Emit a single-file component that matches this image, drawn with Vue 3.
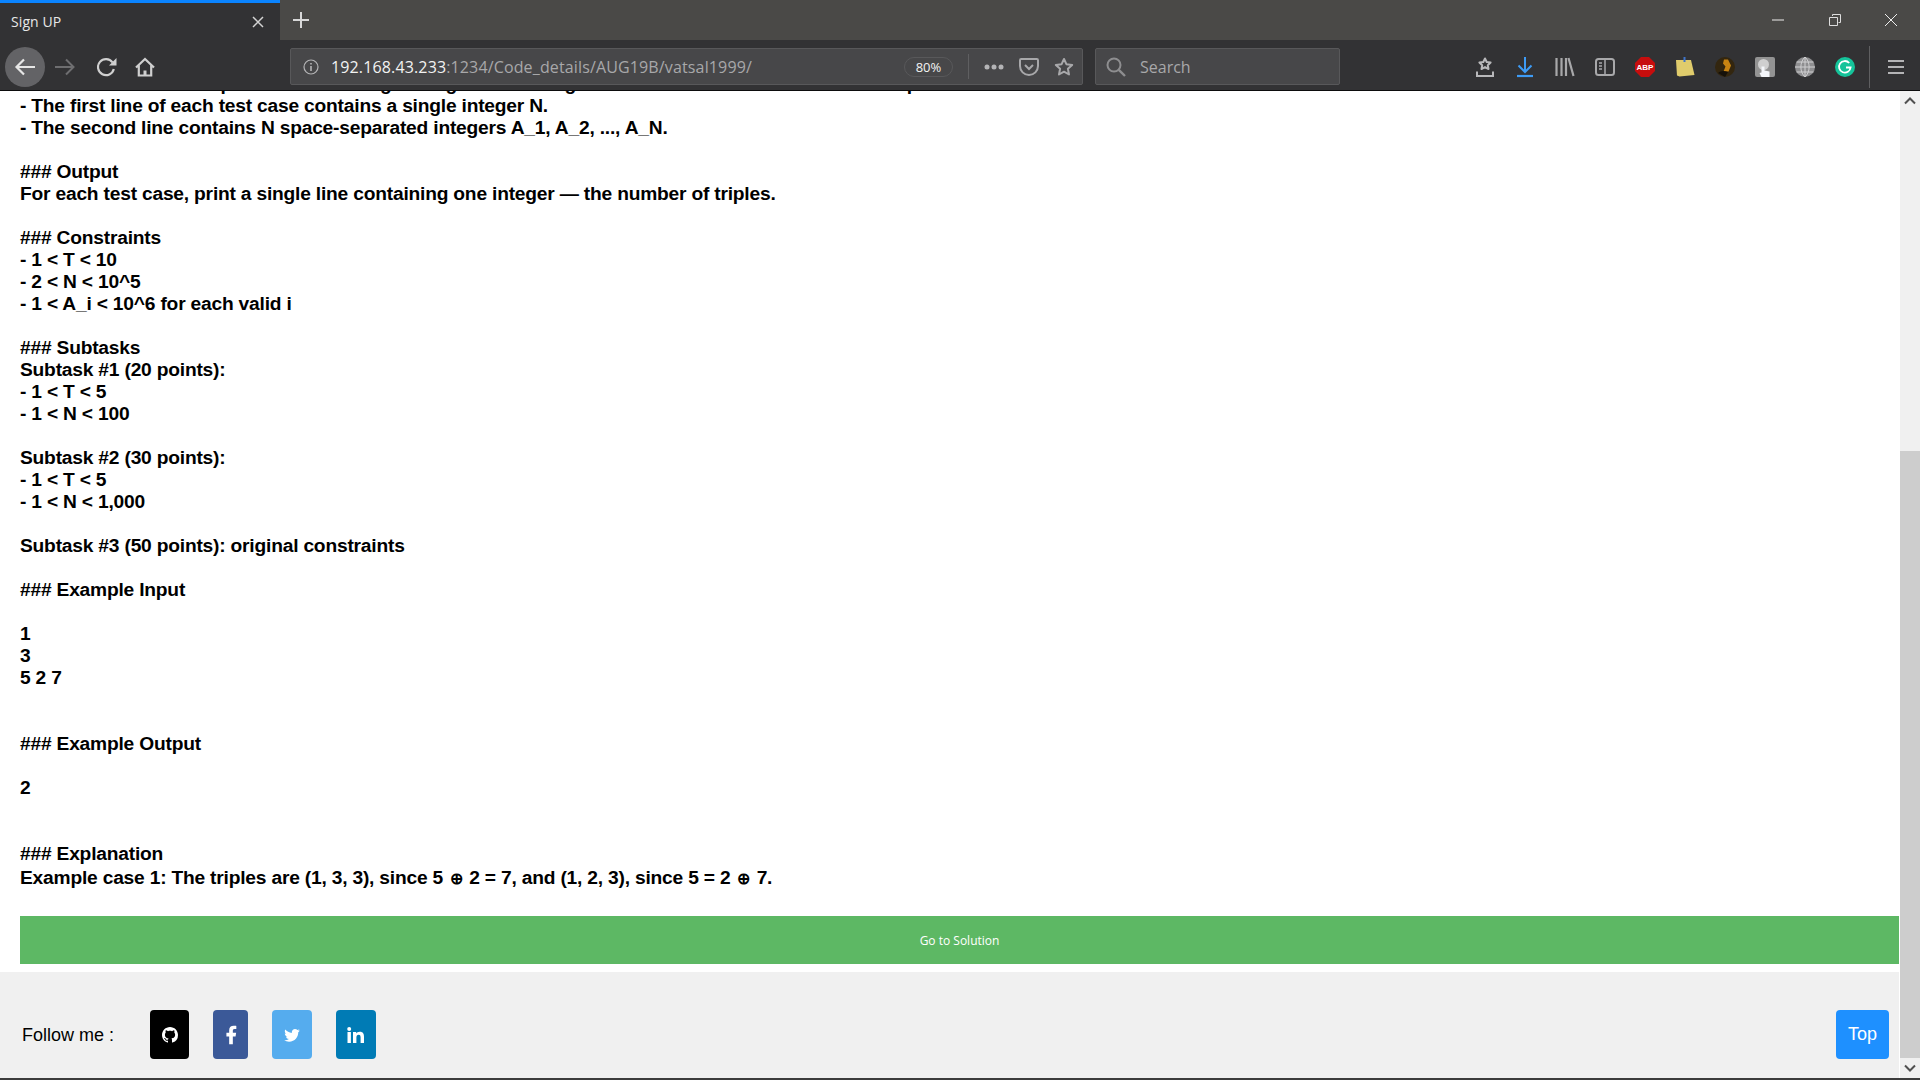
<script setup>
const above = '- The first line of the input contains a single integer T denoting the number of test cases. The description of T test cases follows.'
const body = `- The first line of each test case contains a single integer N.
- The second line contains N space-separated integers A_1, A_2, ..., A_N.

### Output
For each test case, print a single line containing one integer — the number of triples.

### Constraints
- 1 < T < 10
- 2 < N < 10^5
- 1 < A_i < 10^6 for each valid i

### Subtasks
Subtask #1 (20 points):
- 1 < T < 5
- 1 < N < 100

Subtask #2 (30 points):
- 1 < T < 5
- 1 < N < 1,000

Subtask #3 (50 points): original constraints

### Example Input

1
3
5 2 7


### Example Output

2


### Explanation`
</script>

<template>
  <div class="window">
    <div class="tabbar">
      <div class="tab">
        <span class="tab-title">Sign UP</span>
        <svg class="tab-close" width="12" height="12" viewBox="0 0 12 12"><path d="M1 1l10 10M11 1L1 11" stroke="#d4d4d4" stroke-width="1.5"/></svg>
      </div>
      <svg class="newtab" width="18" height="18" viewBox="0 0 18 18"><path d="M9 1v16M1 9h16" stroke="#d8d8d8" stroke-width="2"/></svg>
      <div class="winctl">
        <svg class="ctl" width="14" height="14" viewBox="0 0 14 14"><path d="M1 7h12" stroke="#eee" stroke-width="1"/></svg>
        <svg class="ctl" width="14" height="14" viewBox="0 0 14 14"><path d="M4.500 3V1.500h8v8H10.500M1.500 4.500h8v8h-8z" fill="none" stroke="#ddd" stroke-width="1"/></svg>
        <svg class="ctl" width="14" height="14" viewBox="0 0 14 14"><path d="M1 1l12 12M13 1L1 13" stroke="#eee" stroke-width="1"/></svg>
      </div>
    </div>
    <div class="toolbar">
      <div class="slot back">
        <svg width="22" height="20" viewBox="0 0 22 20"><path d="M21 10H2.500M10 2.500L2.500 10l7.500 7.500" fill="none" stroke="#e6e6e6" stroke-width="2.200"/></svg>
      </div>
      <div class="slot">
        <svg width="22" height="20" viewBox="0 0 22 20"><path d="M1 10h18.500M12 2.500l7.500 7.500-7.500 7.500" fill="none" stroke="#6e6e70" stroke-width="2"/></svg>
      </div>
      <div class="slot">
        <svg class="nudge" width="20" height="20" viewBox="0 0 20 20"><path d="M15.500 5.400A8 8 0 1 0 16.800 12" fill="none" stroke="#cfcfcf" stroke-width="2.200"/><path d="M19.500 1v7.500H12z" fill="#cfcfcf"/></svg>
      </div>
      <div class="slot">
        <svg width="20" height="20" viewBox="0 0 20 20"><path d="M1 10.500L10 2l9 8.500M3.800 8.500V18.500h12.400V8.500" fill="none" stroke="#cfcfcf" stroke-width="2.200"/><path d="M8.500 18.500v-5h3v5z" fill="#cfcfcf"/></svg>
      </div>
      <div class="urlbar">
        <svg class="info" width="16" height="16" viewBox="0 0 16 16"><circle cx="8" cy="8" r="7" fill="none" stroke="#b4b4b6" stroke-width="1.200"/><path d="M8 7v5M8 4v1.600" stroke="#b4b4b6" stroke-width="1.600"/></svg>
        <span class="host">192.168.43.233</span>
        <span class="url">:1234/Code_details/AUG19B/vatsal1999/</span>
        <span class="zoom">80%</span>
        <span class="sep"></span>
        <svg class="pa-dots" width="20" height="6" viewBox="0 0 20 6"><circle cx="3" cy="3" r="2.500" fill="#b4b4b6"/><circle cx="10" cy="3" r="2.500" fill="#b4b4b6"/><circle cx="17" cy="3" r="2.500" fill="#b4b4b6"/></svg>
        <svg class="pa-pocket" width="20" height="18" viewBox="0 0 20 18"><path d="M1 2.200c0-.7.5-1.200 1.200-1.200h15.600c.7 0 1.200.5 1.200 1.200V8a9 9 0 0 1-18 0z" fill="none" stroke="#a8a8aa" stroke-width="2" stroke-linejoin="round"/><path d="M6 7l4 4 4-4" fill="none" stroke="#a8a8aa" stroke-width="2"/></svg>
        <svg class="pa-star" width="20" height="20" viewBox="0 0 20 20"><path d="M10 2l2.400 5.200 5.800.7-4.300 3.900 1.100 5.700-5-2.800-5 2.800 1.100-5.700L1.800 7.900l5.800-.7z" fill="none" stroke="#a8a8aa" stroke-width="2" stroke-linejoin="round"/></svg>
      </div>
      <div class="searchbar">
        <svg width="20" height="20" viewBox="0 0 20 20"><circle cx="8" cy="8" r="6.500" fill="none" stroke="#8e8e90" stroke-width="2"/><path d="M12.800 12.800L19 19" stroke="#8e8e90" stroke-width="2.400"/></svg>
        <span>Search</span>
      </div>
      <div class="tools">
        <div class="slot">
          <svg width="20" height="20" viewBox="0 0 20 20"><path d="M10 1.500l1.700 3.500 3.900.5-2.800 2.700.7 3.800-3.500-1.900-3.500 1.900.7-3.800-2.800-2.700 3.900-.5z" fill="none" stroke="#b8b8ba" stroke-width="2" stroke-linejoin="round"/><path d="M2 14.500V19H18V14.500" fill="none" stroke="#b8b8ba" stroke-width="2"/></svg>
        </div>
        <div class="slot">
          <svg width="20" height="22" viewBox="0 0 20 22"><path d="M10 1v15M3.500 9.500L10 16l6.500-6.500" fill="none" stroke="#3d9bf5" stroke-width="2"/><path d="M2 20h16" stroke="#3d9bf5" stroke-width="2.200"/></svg>
        </div>
        <div class="slot">
          <svg width="20" height="20" viewBox="0 0 20 20"><path d="M1.500 1v18M6.500 1v18M11 1v18M13.500 1l5 18" fill="none" stroke="#a8a8aa" stroke-width="2.200"/></svg>
        </div>
        <div class="slot">
          <svg width="20" height="18" viewBox="0 0 20 18"><rect x="1" y="1" width="18" height="16" rx="2.500" fill="none" stroke="#a8a8aa" stroke-width="2"/><path d="M10 1v16M4 5h3M4 8h3M4 11h3" stroke="#a8a8aa" stroke-width="1.500"/></svg>
        </div>
        <div class="slot">
          <svg width="20" height="20" viewBox="0 0 20 20"><path d="M6 0h8l6 6v8l-6 6H6l-6-6V6z" fill="#c70d0d"/><text x="10" y="13" class="abp" text-anchor="middle">ABP</text></svg>
        </div>
        <div class="slot">
          <svg width="20" height="20" viewBox="0 0 20 20"><path d="M1 3h15l3.500 15-15 1.500-2.500-1z" fill="#e0cc6c"/><path d="M8.500 0h2v5h-2z" fill="#3f74c9"/></svg>
        </div>
        <div class="slot">
          <svg width="20" height="20" viewBox="0 0 20 20"><circle cx="10" cy="10" r="10" fill="#33260f"/><path d="M9 2.500h4l3 6-2.500 6h-5l2-5-2.500-3z" fill="#c98412"/><path d="M3 16c2-2 6-3 10-1l-3 5z" fill="#15110a"/></svg>
        </div>
        <div class="slot">
          <svg width="20" height="20" viewBox="0 0 20 20"><rect width="20" height="20" rx="2" fill="#939393"/><circle cx="8.500" cy="7.500" r="5.500" fill="#cfcfcf"/><path d="M6.500 20l-2-4 2-.5V9.500h3v4l5 1v5.500z" fill="#f4f6fa"/></svg>
        </div>
        <div class="slot">
          <svg width="20" height="20" viewBox="0 0 20 20"><circle cx="10" cy="10" r="10" fill="#8e8e90"/><path d="M10 0v20M0 10h20M1.500 5h17M1.500 15h17M10 0c-5.500 5-5.500 15 0 20M10 0c5.500 5 5.500 15 0 20" fill="none" stroke="#cfcfd1" stroke-width="1"/></svg>
        </div>
        <div class="slot">
          <svg width="20" height="20" viewBox="0 0 20 20"><circle cx="10" cy="10" r="10" fill="#15c39a"/><path d="M14.200 6a5.800 5.800 0 1 0 1.400 4.500h-4.600" fill="none" stroke="#fff" stroke-width="1.800"/></svg>
        </div>
      </div>
      <span class="tsep"></span>
      <svg class="burger" width="16" height="16" viewBox="0 0 16 16"><path d="M0 2h16M0 8h16M0 14h16" stroke="#b4b4b6" stroke-width="2.200"/></svg>
    </div>
    <div class="viewport">
      <main class="page">
        <div class="content">
          <div class="statement"><div class="cut">{{ above }}</div><div class="text">{{ body }}</div><div class="last">Example case 1: The triples are (1, 3, 3), since 5 <span class="xor">⊕</span> 2 = 7, and (1, 2, 3), since 5 = 2 <span class="xor">⊕</span> 7.</div></div>
          <button class="solution">Go to Solution</button>
        </div>
        <footer class="footer">
          <span class="follow">Follow me :</span>
          <a class="social gh">
            <svg width="16" height="16" viewBox="0 0 16 16"><path fill="#fff" d="M8 0C3.580 0 0 3.580 0 8c0 3.540 2.290 6.530 5.470 7.590.4.07.55-.17.55-.38 0-.19-.01-.82-.01-1.490-2.010.37-2.530-.49-2.690-.94-.09-.23-.48-.94-.82-1.130-.28-.15-.68-.52-.01-.53.63-.01 1.080.58 1.230.82.72 1.210 1.870.87 2.330.66.07-.52.28-.87.51-1.070-1.780-.2-3.640-.89-3.640-3.950 0-.87.31-1.590.82-2.150-.08-.2-.36-1.020.08-2.120 0 0 .67-.21 2.200.82.64-.18 1.320-.27 2-.27.68 0 1.360.09 2 .27 1.530-1.040 2.200-.82 2.200-.82.44 1.100.16 1.920.08 2.120.51.56.82 1.270.82 2.150 0 3.070-1.870 3.750-3.650 3.950.29.25.54.73.54 1.480 0 1.070-.01 1.930-.01 2.200 0 .21.15.46.55.38A8.013 8.013 0 0016 8c0-4.420-3.580-8-8-8z"/></svg>
          </a>
          <a class="social fb">
            <svg width="22" height="22" viewBox="0 0 24 24"><path fill="#fff" d="M14 13.500h3l.6-4H14v-2c0-1.030.3-2 2-2h1.800V2.140c-.326-.043-1.557-.14-2.857-.14C11.928 2 10 3.657 10 6.700v2.800H7v4h3V22h4v-8.500z"/></svg>
          </a>
          <a class="social tw">
            <svg width="18" height="18" viewBox="0 0 24 24"><path fill="#fff" d="M22.460 6c-.77.35-1.600.58-2.460.69.88-.53 1.560-1.370 1.880-2.380-.83.5-1.750.85-2.720 1.050C18.370 4.500 17.260 4 16 4c-2.350 0-4.270 1.920-4.270 4.290 0 .34.04.67.11.98C8.280 9.090 5.110 7.380 3 4.790c-.37.63-.58 1.370-.58 2.150 0 1.490.75 2.810 1.910 3.560-.71 0-1.370-.2-1.950-.5v.03c0 2.080 1.480 3.820 3.440 4.210a4.220 4.220 0 0 1-1.930.07 4.280 4.280 0 0 0 4 2.980 8.521 8.521 0 0 1-5.330 1.840c-.34 0-.68-.02-1.020-.06C3.440 20.290 5.700 21 8.120 21 16 21 20.330 14.460 20.330 8.790c0-.19 0-.37-.01-.56.84-.6 1.560-1.360 2.140-2.230z"/></svg>
          </a>
          <a class="social li">
            <svg width="18" height="16" viewBox="0 0 18 16"><rect x="0.500" y="5" width="3.400" height="11" fill="#fff"/><circle cx="2.200" cy="2" r="2" fill="#fff"/><path fill="#fff" d="M6 5h3.200v1.500C9.800 5.500 11 4.700 12.800 4.700c3.400 0 4.200 2.200 4.200 5.100V16h-3.400v-5.500c0-1.400-.3-2.800-1.900-2.800-1.700 0-2.300 1.300-2.300 2.800V16H6z"/></svg>
          </a>
          <button class="top">Top</button>
        </footer>
      </main>
      <div class="scrollbar">
        <div class="sb-btn">
          <svg width="12" height="8" viewBox="0 0 12 8"><path d="M1 6.500l5-5 5 5" fill="none" stroke="#505050" stroke-width="2"/></svg>
        </div>
        <div class="sb-track"><div class="sb-thumb"></div></div>
        <div class="sb-btn">
          <svg width="12" height="8" viewBox="0 0 12 8"><path d="M1 1.500l5 5 5-5" fill="none" stroke="#505050" stroke-width="2"/></svg>
        </div>
      </div>
    </div>
    <div class="taskbar"></div>
  </div>
</template>

<style scoped>
.window {
  width: 1920px;
  height: 1080px;
  display: flex;
  flex-direction: column;
  overflow: hidden;
  background: #fff;
  font-family: "Liberation Sans", Arial, sans-serif;
}
.tabbar {
  height: 40px;
  flex: none;
  background: #4a4947;
  display: flex;
  align-items: center;
  font-family: "Open Sans", sans-serif;
}
.tab {
  width: 280px;
  height: 40px;
  box-sizing: border-box;
  background: #323234;
  border-top: 3px solid #0a84ff;
  display: flex;
  align-items: center;
  padding: 0 16px 0 11px;
}
.tab-title {
  flex: 1;
  color: #e8e8e8;
  font-size: 14px;
  letter-spacing: 0.1px;
}
.newtab {
  margin-left: 12px;
}
.winctl {
  margin-left: auto;
  display: flex;
  align-items: center;
  gap: 42.500px;
  padding-right: 22px;
}
.ctl {
  display: block;
}
.toolbar {
  height: 51px;
  flex: none;
  box-sizing: border-box;
  background: #323234;
  border-bottom: 1px solid #0c0c0d;
  display: flex;
  align-items: center;
  padding: 3px 0 0 5px;
  font-family: "Open Sans", sans-serif;
}
.slot {
  width: 40px;
  height: 40px;
  flex: none;
  display: flex;
  align-items: center;
  justify-content: center;
}
.nudge {
  margin-left: 4px;
}
.back {
  border-radius: 50%;
  background: #636366;
}
.urlbar {
  width: 793px;
  height: 37px;
  box-sizing: border-box;
  margin-left: 125px;
  background: #474749;
  border: 1px solid #58585a;
  border-radius: 2px;
  display: flex;
  align-items: center;
  padding: 0 8px 0 12px;
  flex: none;
  font-size: 16px;
  letter-spacing: 0.14px;
  white-space: nowrap;
}
.info {
  flex: none;
}
.host {
  margin-left: 12px;
  color: #f2f2f2;
  flex: none;
}
.url {
  color: #a8a8aa;
  flex: 1;
}
.zoom {
  width: 49px;
  height: 20px;
  box-sizing: border-box;
  border: 1px solid #58585a;
  border-radius: 10px;
  color: #f2f2f2;
  font-size: 13px;
  line-height: 18px;
  letter-spacing: 0;
  text-align: center;
  flex: none;
}
.sep {
  width: 1px;
  height: 25px;
  background: #5f5f61;
  margin-left: 15px;
  flex: none;
}
.pa-dots {
  margin-left: 15px;
  flex: none;
}
.pa-pocket {
  margin-left: 15px;
  flex: none;
}
.pa-star {
  margin-left: 15px;
  flex: none;
}
.searchbar {
  width: 245px;
  height: 37px;
  box-sizing: border-box;
  margin-left: 12px;
  background: #474749;
  border: 1px solid #58585a;
  border-radius: 2px;
  display: flex;
  align-items: center;
  padding-left: 10px;
  gap: 14px;
  color: #a8a8aa;
  font-size: 16px;
  flex: none;
}
.tools {
  display: flex;
  margin-left: 125px;
  flex: none;
}
.abp {
  font: bold 8px "Liberation Sans", sans-serif;
  fill: #fff;
}
.tsep {
  width: 1px;
  height: 42px;
  background: #5f5f61;
  margin-left: 4px;
  flex: none;
}
.burger {
  margin-left: 18px;
  flex: none;
}
.viewport {
  flex: 1;
  min-height: 0;
  display: flex;
}
.page {
  flex: 1;
  min-width: 0;
  display: flex;
  flex-direction: column;
  justify-content: flex-end;
  overflow: hidden;
}
.content {
  padding: 0 0 8px 20px;
}
.statement {
  font-size: 19.200px;
  font-weight: bold;
  letter-spacing: -0.2px;
  color: #000;
  line-height: 22px;
  white-space: pre-wrap;
  margin-bottom: 25px;
}
.last {
  line-height: 26px;
}
.xor {
  font-size: 16px;
  line-height: 0;
  padding: 0 1.600px;
}
.solution {
  display: block;
  width: 100%;
  height: 48px;
  border: none;
  background: #5db864;
  color: #fff;
  font: 12px "Open Sans", sans-serif;
  text-align: center;
  padding: 0;
}
.footer {
  height: 106px;
  flex: none;
  box-sizing: border-box;
  background: #f0f0f0;
  display: flex;
  align-items: center;
  padding: 38px 10px 19px 22px;
}
.follow {
  font-size: 18px;
  color: #000;
  width: 128px;
  margin-top: 2px;
}
.social {
  height: 49px;
  border-radius: 4px;
  display: flex;
  align-items: center;
  justify-content: center;
  flex: none;
}
.gh { width: 39px; background: #000; }
.fb { width: 35px; background: #3b5998; margin-left: 24px; }
.tw { width: 40px; background: #55acee; margin-left: 24px; }
.li { width: 40px; background: #007bb5; margin-left: 24px; }
.top {
  margin-left: auto;
  width: 53px;
  height: 49px;
  border: none;
  border-radius: 4px;
  background: #1e90ff;
  color: #fff;
  font: 18px "Liberation Sans", Arial, sans-serif;
  padding: 0;
}
.scrollbar {
  width: 20px;
  flex: none;
  margin-left: 1px;
  background: #f0f0f0;
  display: flex;
  flex-direction: column;
}
.sb-btn {
  height: 20px;
  flex: none;
  display: flex;
  align-items: center;
  justify-content: center;
}
.sb-track {
  flex: 1;
  display: flex;
  flex-direction: column;
  justify-content: flex-end;
}
.sb-thumb {
  height: 607px;
  background: #cdcdcd;
}
.taskbar {
  height: 2px;
  flex: none;
  background: #3c3c3c;
}
</style>

<style>
body { margin: 0; }
</style>
